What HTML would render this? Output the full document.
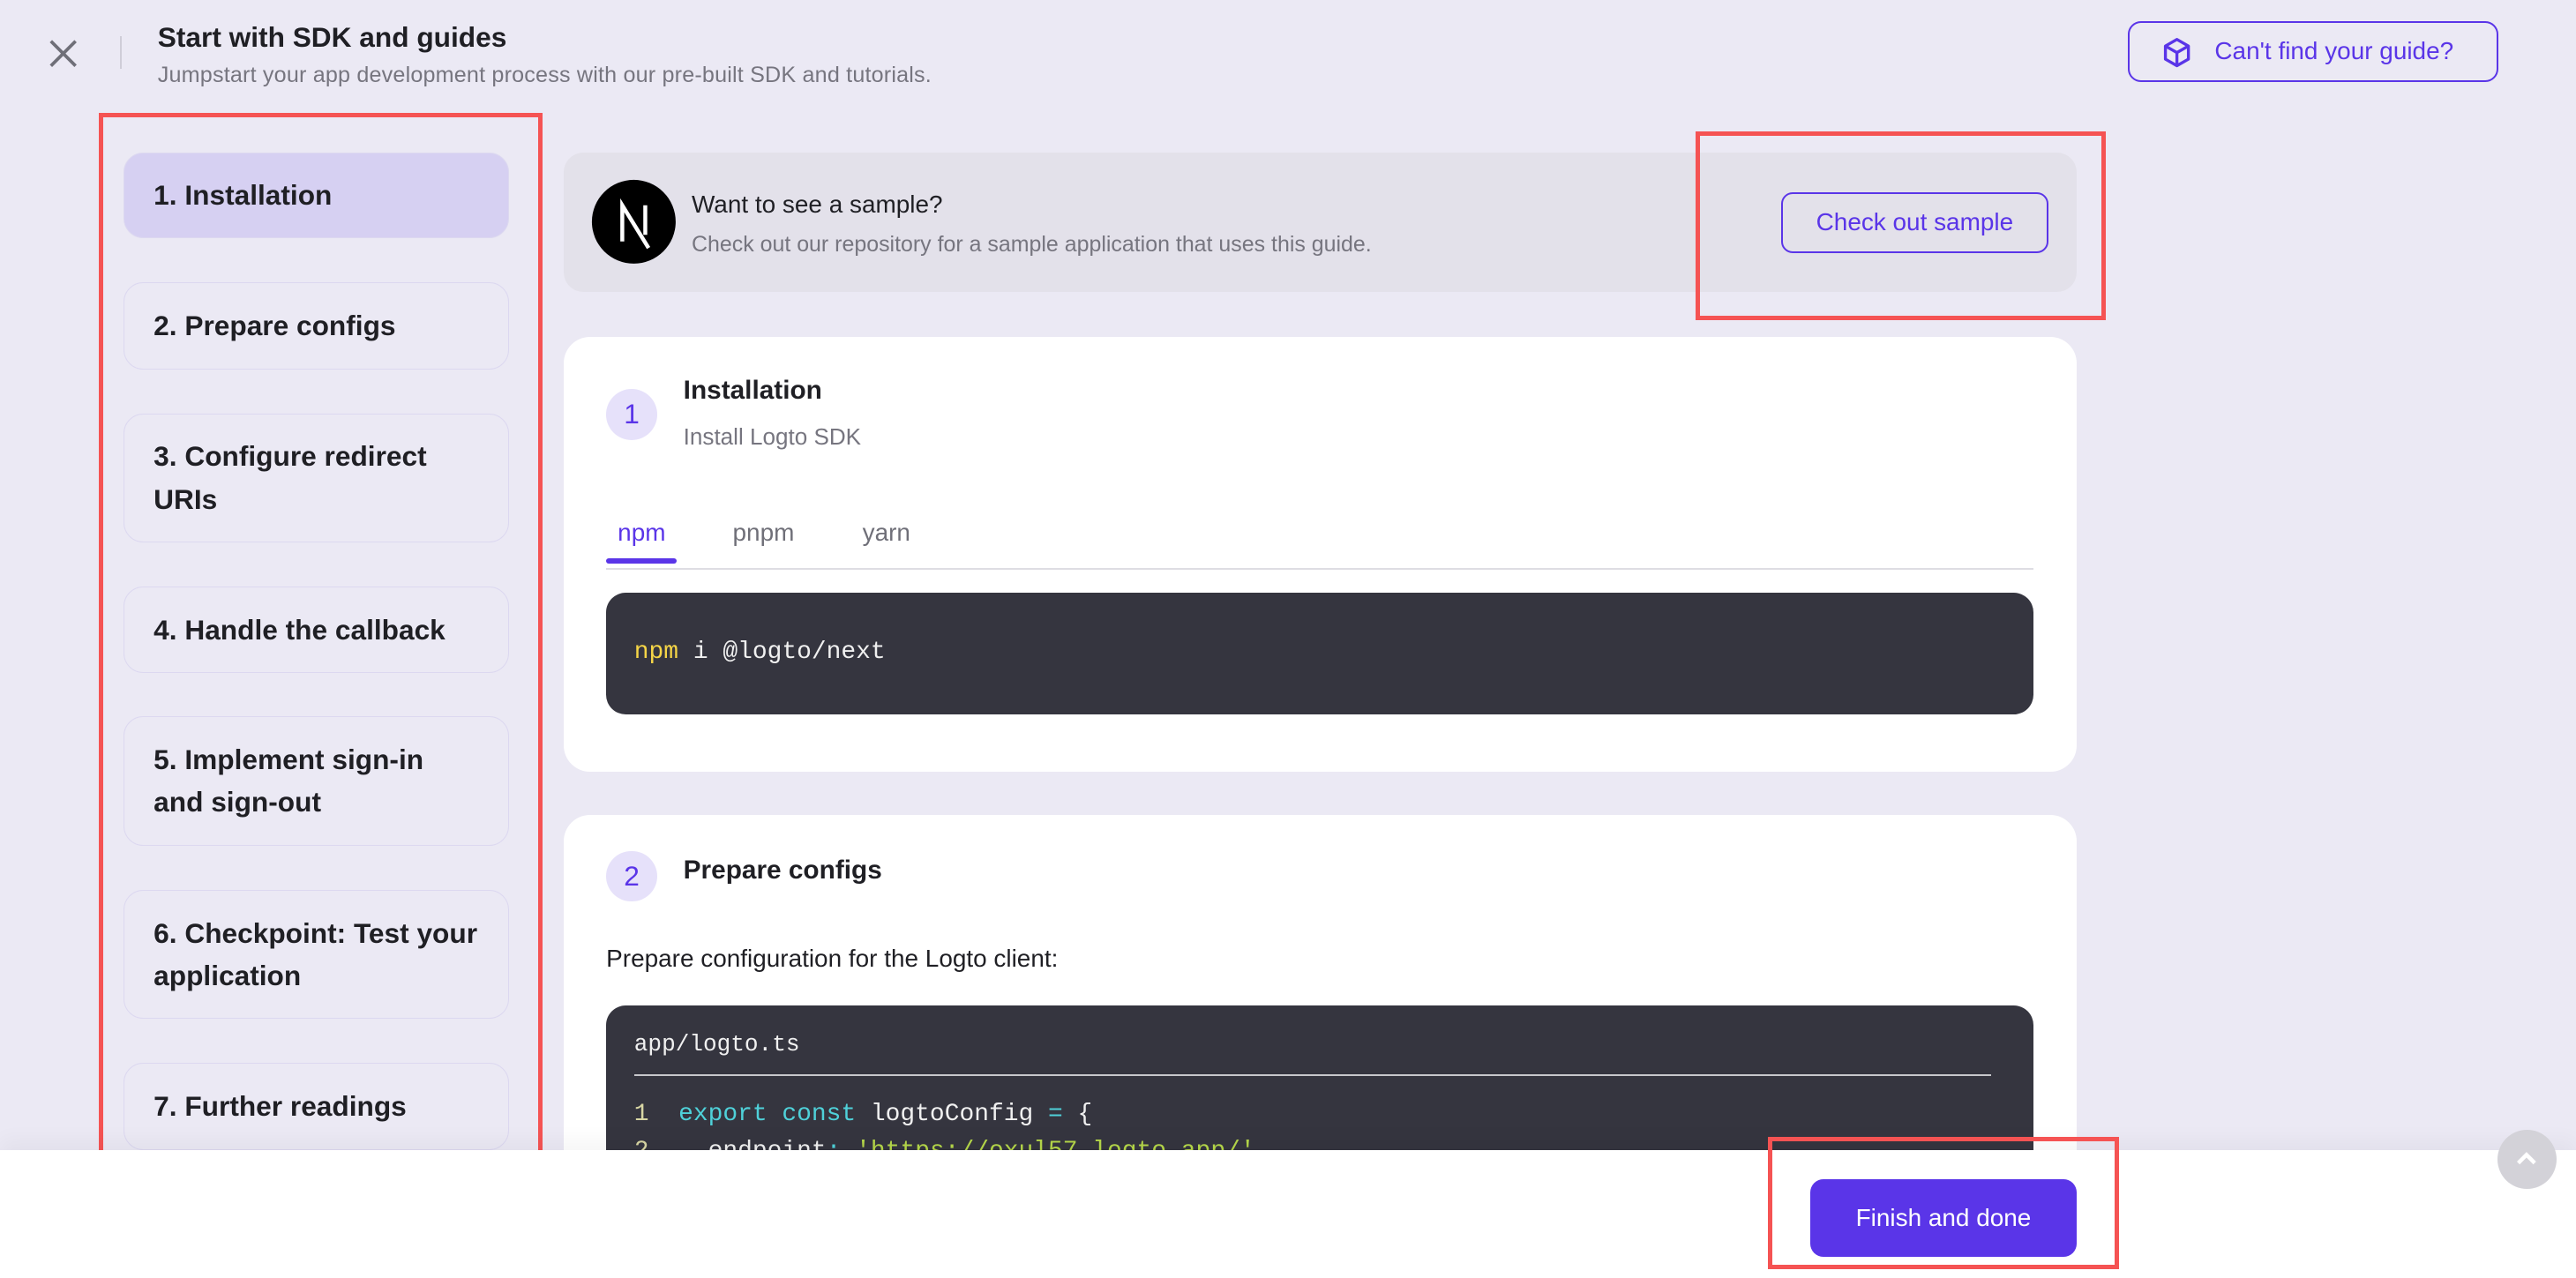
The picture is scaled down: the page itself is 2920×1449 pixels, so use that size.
<!DOCTYPE html>
<html><head><meta charset="utf-8"><style>
html,body{margin:0;padding:0;}
body{width:2920px;height:1448px;overflow:hidden;background:#ebe9f4;font-family:"Liberation Sans",sans-serif;}
#w{zoom:1.8622;width:1568px;height:778px;position:relative;overflow:hidden;}
.a{position:absolute;}
.item{position:absolute;left:75px;width:235px;border:1px solid #dcd8f0;border-radius:12px;box-sizing:border-box;font-size:17px;font-weight:bold;color:#1f1f24;padding-left:18px;display:flex;align-items:center;line-height:26px}
.card{position:absolute;left:343px;width:921px;background:#fff;border-radius:16px}
.step{position:absolute;width:31px;height:31px;border-radius:50%;background:#e6e1fa;color:#5a35e8;font-size:17px;text-align:center;line-height:31px}
.code{position:absolute;left:369px;width:869px;background:#35353f;border-radius:12px;font-family:"Liberation Mono",monospace;font-size:15px;color:#f0f0f0}
.red{position:absolute;border:3px solid #f55353;box-sizing:border-box}
</style></head><body><div id="w">
<svg class="a" style="left:29px;top:23px" width="19" height="19" viewBox="0 0 19 19"><path d="M2 2L17 17M17 2L2 17" stroke="#6f6f78" stroke-width="2"/></svg>
<div class="a" style="left:73px;top:22px;width:1px;height:20px;background:#cfcdd8"></div>
<div class="a" style="left:96px;top:13px;font-size:17px;font-weight:bold;color:#1f1f24">Start with SDK and guides</div>
<div class="a" style="left:96px;top:38px;font-size:13.5px;color:#76757f;letter-spacing:0.1px">Jumpstart your app development process with our pre-built SDK and tutorials.</div>
<div class="a" style="left:1295px;top:13px;width:226px;height:37px;border:1.5px solid #5a35e8;border-radius:8px;box-sizing:border-box;color:#5a35e8;font-size:15px;line-height:34px;padding-left:52px">Can't find your guide?</div>
<svg class="a" style="left:1315px;top:22px" width="20" height="20" viewBox="0 0 20 20" fill="none" stroke="#5a35e8" stroke-width="1.8" stroke-linejoin="round"><path d="M10 2L17 6V14L10 18L3 14V6Z M3 6L10 10L17 6 M10 10V18"/></svg>

<div class="item" style="top:93px;height:52px;background:#d6d0f2">1. Installation</div>
<div class="item" style="top:172px;height:53px">2. Prepare configs</div>
<div class="item" style="top:252px;height:78px">3. Configure redirect<br>URIs</div>
<div class="item" style="top:357px;height:53px">4. Handle the callback</div>
<div class="item" style="top:436px;height:79px">5. Implement sign-in<br>and sign-out</div>
<div class="item" style="top:542px;height:78px">6. Checkpoint: Test your<br>application</div>
<div class="item" style="top:647px;height:53px">7. Further readings</div>
<div class="red" style="left:60px;top:69px;width:270px;height:634px"></div>

<div class="a" style="left:343px;top:93px;width:921px;height:85px;background:#e3e1ea;border-radius:12px"></div>
<svg class="a" style="left:360px;top:109px" width="52" height="52" viewBox="0 0 52 52"><circle cx="26" cy="26" r="25.5" fill="#000"/><path d="M19 38V16L35 42 M33 16V34" stroke="#fff" stroke-width="2.4" fill="none"/></svg>
<div class="a" style="left:421px;top:116px;font-size:15px;color:#1f1f24">Want to see a sample?</div>
<div class="a" style="left:421px;top:141px;font-size:13.4px;color:#76757f">Check out our repository for a sample application that uses this guide.</div>
<div class="a" style="left:1084px;top:117px;width:163px;height:37px;border:1.5px solid #5a35e8;border-radius:7px;box-sizing:border-box;color:#5a35e8;font-size:15px;line-height:34px;text-align:center">Check out sample</div>
<div class="red" style="left:1032px;top:80px;width:250px;height:115px"></div>

<div class="card" style="top:205px;height:265px"></div>
<div class="step" style="left:369px;top:237px">1</div>
<div class="a" style="left:416px;top:229px;font-size:16px;font-weight:bold;color:#1f1f24">Installation</div>
<div class="a" style="left:416px;top:258px;font-size:14px;color:#76757f">Install Logto SDK</div>
<div class="a" style="left:376px;top:316px;font-size:15px;color:#5a35e8">npm</div>
<div class="a" style="left:446px;top:316px;font-size:15px;color:#6f6f78">pnpm</div>
<div class="a" style="left:525px;top:316px;font-size:15px;color:#6f6f78">yarn</div>
<div class="a" style="left:369px;top:346px;width:869px;height:1px;background:#dedde3"></div>
<div class="a" style="left:369px;top:340px;width:43px;height:3px;border-radius:2px;background:#5a35e8"></div>
<div class="code" style="top:361px;height:74px"><div class="a" style="left:17px;top:28px"><span style="color:#f5d547">npm</span> i @logto/next</div></div>

<div class="card" style="top:496px;height:300px"></div>
<div class="step" style="left:369px;top:518px">2</div>
<div class="a" style="left:416px;top:521px;font-size:16px;font-weight:bold;color:#1f1f24">Prepare configs</div>
<div class="a" style="left:369px;top:575px;font-size:15px;color:#1f1f24">Prepare configuration for the Logto client:</div>
<div class="code" style="top:612px;height:140px">
<div class="a" style="left:17px;top:16px;font-size:14px">app/logto.ts</div>
<div class="a" style="left:17px;top:42px;width:826px;height:1px;background:#c8c8cc"></div>
<div class="a" style="left:17px;top:58px;white-space:pre"><span style="color:#d8d6a4">1</span>  <span style="color:#4fd1d9">export const</span> logtoConfig <span style="color:#4fd1d9">=</span> {</div>
<div class="a" style="left:17px;top:81px;white-space:pre"><span style="color:#d8d6a4">2</span>    endpoint<span style="color:#4fd1d9">:</span> <span style="color:#b6d84a">'https://oxul57.logto.app/'</span>,</div>
</div>

<div class="a" style="left:0;top:700px;width:1568px;height:78px;background:#fff;box-shadow:0 -6px 12px rgba(0,0,0,0.04)"></div>
<div class="a" style="left:1102px;top:718px;width:162px;height:47px;background:#5a35e8;border-radius:8px;color:#fff;font-size:15px;line-height:47px;text-align:center">Finish and done</div>
<div class="red" style="left:1076px;top:692px;width:214px;height:81px"></div>
<div class="a" style="left:1520px;top:688px;width:36px;height:36px;border-radius:50%;background:#d3d2d8"></div>
<svg class="a" style="left:1530px;top:698px" width="16" height="16" viewBox="0 0 16 16"><path d="M3 10L8 5L13 10" stroke="#fff" stroke-width="2.4" fill="none"/></svg>
</div></body></html>
